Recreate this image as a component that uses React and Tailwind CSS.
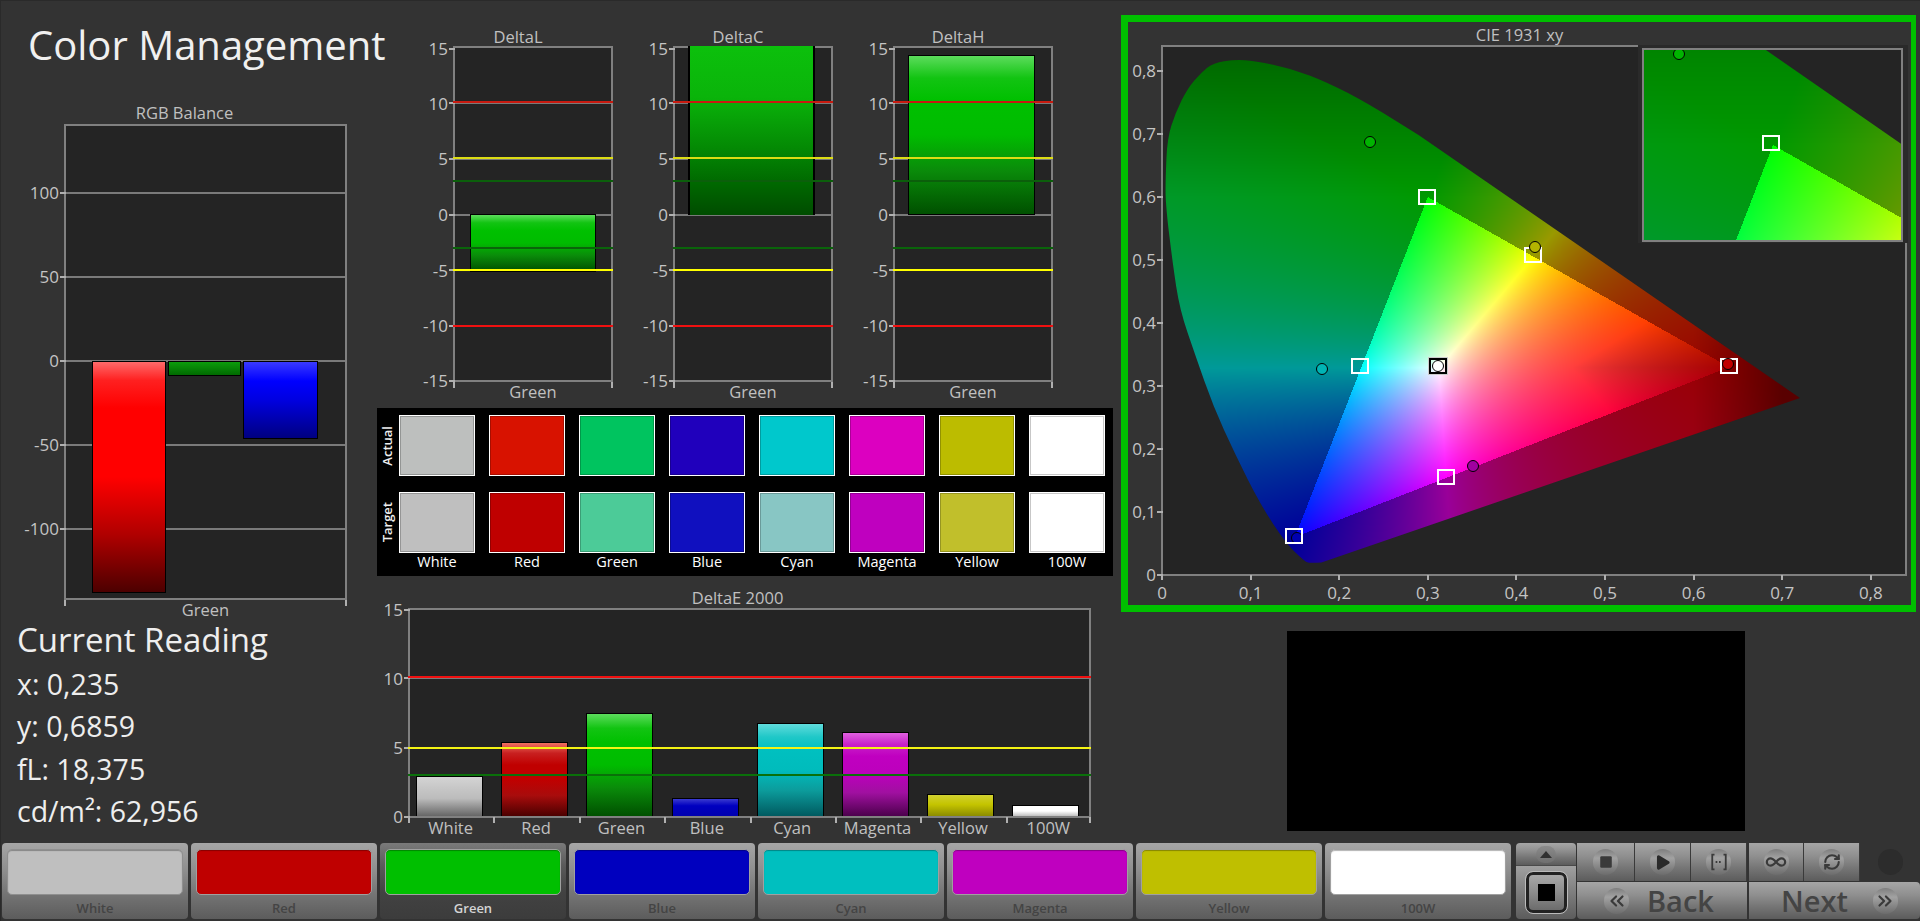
import React, { useEffect, useRef } from 'react';
import { Square, Play, Infinity as InfinityIcon, RefreshCw, ChevronsLeft, ChevronsRight } from 'lucide-react';

// outline of the horseshoe, read off the picture, curved part first
const LOCUS = [
  [0.18, 0.02], [0.166, 0.0185], [0.16, 0.023], [0.14, 0.05], [0.111, 0.112], [0.082, 0.193], [0.058, 0.267],
  [0.038, 0.347], [0.02, 0.421], [0.012, 0.495], [0.004, 0.588], [0.004, 0.631], [0.006, 0.693], [0.015, 0.733],
  [0.029, 0.773], [0.044, 0.797], [0.058, 0.813], [0.082, 0.818], [0.105, 0.816], [0.146, 0.804], [0.187, 0.782],
  [0.233, 0.748], [0.29, 0.698],
];

const gam = (c) => Math.pow(Math.max(c, 0), 1 / 1.15);

function chromaColor(x, y) {
  const Z = 1 - x - y;
  let r = 3.2406 * x - 1.5372 * y - 0.4986 * Z;
  let g = -0.9689 * x + 1.8758 * y + 0.0415 * Z;
  let b = 0.0557 * x - 0.204 * y + 1.057 * Z;
  const inside = Math.min(r, g, b) >= 0;
  r = Math.max(r, 0);
  g = Math.max(g, 0);
  b = Math.max(b, 0);
  const m = Math.max(r, g, b, 1e-6);
  r /= m;
  g /= m;
  b /= m;
  if (inside) {
    // the red corner of the triangle goes darker in the picture
    const t = Math.min(Math.max((0.2 - Math.max(g, b)) / 0.2, 0), 1);
    const f = r >= 1 ? 1 - 0.35 * t : 1;
    return [gam(r) * 255 * f, gam(g) * 255, gam(b) * 255];
  }
  let f = 0.6;
  if (r >= 1) f = 0.6 - 0.25 * (1 - Math.max(g, b)) * (x > 0.6 ? Math.min((x - 0.6) / 0.1, 1) : 0);
  if (g >= 1) f = 0.6 - 0.85 * Math.max(y - 0.6, 0);
  return [r * 255 * f, g * 255 * f, b * 255 * f];
}

function Chromaticity({ w, h, sx, sy, ox, oy }) {
  const ref = useRef(null);
  useEffect(() => {
    const ctx = ref.current.getContext('2d');
    const off = document.createElement('canvas');
    off.width = w;
    off.height = h;
    const octx = off.getContext('2d');
    const img = octx.createImageData(w, h);
    for (let py = 0; py < h; py++) {
      for (let px = 0; px < w; px++) {
        const c = chromaColor((px + 0.5 - ox) / sx, (oy - py - 0.5) / sy);
        const i = (py * w + px) * 4;
        img.data[i] = c[0];
        img.data[i + 1] = c[1];
        img.data[i + 2] = c[2];
        img.data[i + 3] = 255;
      }
    }
    octx.putImageData(img, 0, 0);
    const pts = LOCUS.map(([x, y]) => [x * sx + ox, oy - y * sy]);
    ctx.clearRect(0, 0, w, h);
    ctx.save();
    ctx.beginPath();
    ctx.moveTo(pts[0][0], pts[0][1]);
    for (let i = 1; i < pts.length - 1; i++) {
      ctx.quadraticCurveTo(pts[i][0], pts[i][1], (pts[i][0] + pts[i + 1][0]) / 2, (pts[i][1] + pts[i + 1][1]) / 2);
    }
    ctx.lineTo(pts[pts.length - 1][0], pts[pts.length - 1][1]);
    ctx.lineTo(0.72 * sx + ox, oy - 0.281 * sy);
    ctx.closePath();
    ctx.clip();
    ctx.drawImage(off, 0, 0);
    ctx.restore();
  }, [w, h, sx, sy, ox, oy]);
  return <canvas ref={ref} width={w} height={h} className="absolute left-0 top-0" />;
}

const Marker = ({ x, y, className }) => (
  <span className={`absolute rounded-full border-[1.5px] border-black w-[12px] h-[12px] -translate-x-1/2 -translate-y-1/2 ${className}`} style={{ left: x, top: y }} />
);

const Target = ({ x, y, dark }) => (
  <span className={`absolute w-[18px] h-[16px] border-2 -translate-x-1/2 -translate-y-1/2 ${dark ? 'border-black outline outline-[#cccccc]' : 'border-white'}`} style={{ left: x, top: y }} />
);

// ticks to the left of a plot, y comes from the chart scale
const YTicks = ({ ticks }) =>
  ticks.map(([label, y]) => (
    <div key={label} className="absolute right-full flex items-center h-0 text-[17px] text-[#c4c4c4]" style={{ top: y }}>
      <span className="mr-px">{label}</span>
      <span className="w-[6px] h-[2px] bg-[#b0b0b0]" />
    </div>
  ));

const Grid = ({ ys }) =>
  ys.map((y) => <div key={y} className="absolute left-0 right-0 h-[2px] bg-[#7a7a7a]" style={{ top: y - 1 }} />);

const Limit = ({ y, className }) => <div className={`absolute -left-[2px] -right-[2px] z-10 ${className}`} style={{ top: y }} />;

const BAR_GREEN = 'bg-[linear-gradient(#5cdc5c_0%,#12c412_14%,#00c000_28%,#00bc00_50%,#0a8c0a_72%,#005000_100%)]';

const DELTA_TICKS = [15, 10, 5, 0, -5, -10, -15];

function DeltaChart({ title, bar, barClass, left, width, top, height }) {
  const yOf = (v) => 166.7 - v * 11.13;
  return (
    <div className="w-[160px] shrink-0">
      <div className="h-[20px] pr-[30px] text-center text-[16.5px] leading-[22px] text-[#c0c0c0] whitespace-nowrap">{title}</div>
      <div className="relative h-[336px] border-2 border-[#808080] bg-[#242424]">
        <YTicks ticks={DELTA_TICKS.map((v) => [String(v), v === 15 ? yOf(v) + 1 : v === -15 ? yOf(v) - 1 : yOf(v)])} />
        <Grid ys={[10, 5, 0, -5, -10].map(yOf)} />
        <div className={`absolute border border-black box-border ${bar} ${barClass}`} style={{ left, width, top, height }} />
        <Limit y={yOf(10) - 2} className="h-[2px] bg-[#c81a10]" />
        <Limit y={yOf(5) - 2} className="h-[2px] bg-[#dcdc14]" />
        <Limit y={yOf(3) - 1} className="h-[2px] bg-[#0b5f0b]" />
        <Limit y={yOf(-3) - 1} className="h-[2px] bg-[#0a640a]" />
        <Limit y={yOf(-5) - 1} className="h-[2px] bg-[#ffff00]" />
        <Limit y={yOf(-10) - 1} className="h-[2px] bg-[#f01010]" />
        <span className="absolute -left-[2px] -bottom-[8px] w-[2px] h-[6px] bg-[#b0b0b0]" />
        <span className="absolute -right-[2px] -bottom-[8px] w-[2px] h-[6px] bg-[#b0b0b0]" />
      </div>
      <div className="h-[21px] text-center text-[16.5px] leading-[19px] text-[#c0c0c0]">Green</div>
    </div>
  );
}

function RgbChart() {
  const yOf = (v) => 235 - v * 1.68;
  return (
    <div className="ml-[63px] w-[283px]">
      <div className="relative h-[476px] border-2 border-[#808080] bg-[#242424]">
        <YTicks ticks={[100, 50, 0, -50, -100].map((v) => [String(v), yOf(v)])} />
        <Grid ys={[100, 50, 0, -50, -100].map(yOf)} />
        <div className="absolute left-[26px] flex items-start gap-[2px]" style={{ top: yOf(0) }}>
          <div className="w-[74px] h-[232px] border border-black bg-[linear-gradient(#ff6a6a_0%,#ff2020_8%,#ff0000_20%,#ff0000_50%,#b00000_75%,#4c0000_100%)]" />
          <div className="w-[73px] h-[15px] border border-black bg-[linear-gradient(#0c9c0c,#006a00)]" />
          <div className="w-[75px] h-[78px] border border-black bg-[linear-gradient(#3a3aff_0%,#0000ff_25%,#0000e0_50%,#000080_100%)]" />
        </div>
        <span className="absolute -left-[2px] -bottom-[8px] w-[2px] h-[6px] bg-[#b0b0b0]" />
        <span className="absolute -right-[2px] -bottom-[8px] w-[2px] h-[6px] bg-[#b0b0b0]" />
      </div>
      <div className="h-[22px] text-center text-[16.5px] leading-[20px] text-[#c0c0c0]">Green</div>
    </div>
  );
}

const SWATCHES = [
  ['White', '#bdbfbe', '#bfbfbf'],
  ['Red', '#d81200', '#bf0000'],
  ['Green', '#00c45f', '#4ccb98'],
  ['Blue', '#2000bc', '#1010bf'],
  ['Cyan', '#00c8cc', '#88c6c4'],
  ['Magenta', '#dc00c0', '#bf00bf'],
  ['Yellow', '#bcbc00', '#c1bf2b'],
  ['100W', '#ffffff', '#ffffff'],
];

const Swatch = ({ color }) => (
  <div className="h-[61px] border border-white shadow-[inset_0_0_0_1px_rgba(0,0,0,0.22)]" style={{ backgroundColor: color }} />
);

function SwatchPanel() {
  return (
    <div className="w-[736px] h-[168px] bg-black flex">
      <div className="w-[20px] shrink-0 flex flex-col pt-[7px] gap-[16px] text-[13px] font-semibold text-[#eeeeee]">
        <div className="h-[61px] flex items-center justify-center"><span className="[writing-mode:vertical-rl] rotate-180 leading-none">Actual</span></div>
        <div className="h-[61px] flex items-center justify-center"><span className="[writing-mode:vertical-rl] rotate-180 leading-none">Target</span></div>
      </div>
      <div className="grid grid-cols-8 gap-x-[14px] w-[706px] ml-[2px] pt-[7px] content-start">
        {SWATCHES.map((s) => <Swatch key={s[0] + 'a'} color={s[1]} />)}
        <div className="col-span-8 h-[16px]" />
        {SWATCHES.map((s) => <Swatch key={s[0] + 't'} color={s[2]} />)}
        {SWATCHES.map((s) => (
          <div key={s[0] + 'l'} className="mt-[1px] text-center text-[14.5px] leading-[15px] text-white">{s[0]}</div>
        ))}
      </div>
    </div>
  );
}

const DE_BARS = [
  ['White', 40, 'bg-[linear-gradient(#d4d4d4_0%,#c6c6c6_30%,#bcbcbc_55%,#666666_100%)]'],
  ['Red', 74, 'bg-[linear-gradient(#f07060_0%,#c82020_14%,#c00000_30%,#c00000_50%,#a80c0c_72%,#4c0000_100%)]'],
  ['Green', 103, BAR_GREEN],
  ['Blue', 18, 'bg-[linear-gradient(#3a3ad0_0%,#0000c0_40%,#0000b0_100%)]'],
  ['Cyan', 93, 'bg-[linear-gradient(#60dcdc_0%,#20c8c8_14%,#00c0c0_28%,#00bcbc_50%,#0c9c9c_72%,#005a60_100%)]'],
  ['Magenta', 84, 'bg-[linear-gradient(#e060e0_0%,#c820c8_14%,#c000c0_28%,#bc00bc_50%,#a010a0_72%,#4c004c_100%)]'],
  ['Yellow', 22, 'bg-[linear-gradient(#d0d030_0%,#c4c400_45%,#8c8c00_100%)]'],
  ['100W', 11, 'bg-[linear-gradient(#ffffff_0%,#ffffff_50%,#c0c0c0_100%)]'],
];

function DeltaEChart() {
  const yOf = (v) => 207 - v * 13.87;
  return (
    <div className="ml-[31px] w-[683px]">
      <div className="h-[20px] pr-[24px] text-center text-[16.5px] leading-[20px] text-[#c0c0c0]">DeltaE 2000</div>
      <div className="relative h-[210px] border-2 border-[#808080] bg-[#242424]">
        <YTicks ticks={[[ '15', yOf(15) + 1 ], [ '10', yOf(10) ], [ '5', yOf(5) ], [ '0', yOf(0) ]]} />
        <Grid ys={[yOf(10), yOf(5)]} />
        <div className="absolute inset-0 flex items-end gap-[18.2px] pl-[6px]">
          {DE_BARS.map(([name, h, cls]) => (
            <div key={name} className={`w-[67px] border border-black border-b-0 ${cls}`} style={{ height: h }} />
          ))}
        </div>
        <Limit y={yOf(10) - 2} className="h-[2px] bg-[#f01010]" />
        <Limit y={yOf(5) - 1} className="h-[2px] bg-[#f4f414]" />
        <Limit y={yOf(3) - 1} className="h-[2px] bg-[#0a700a]" />
      </div>
      <div className="grid grid-cols-8 h-[20px] -mt-px">
        {SWATCHES.map((s, i) => (
          <div key={s[0]} className={`relative text-center text-[16.5px] leading-[21px] text-[#c0c0c0] ${i === 7 ? 'after:absolute after:right-0 after:top-0 after:w-[2px] after:h-[6px] after:bg-[#b0b0b0]' : ''}`}>
            <span className="absolute left-0 top-0 w-[2px] h-[6px] bg-[#b0b0b0]" />
            {s[0]}
          </div>
        ))}
      </div>
    </div>
  );
}

const CIE_X = [0, 0.1, 0.2, 0.3, 0.4, 0.5, 0.6, 0.7, 0.8];
const CIE_Y = [0.8, 0.7, 0.6, 0.5, 0.4, 0.3, 0.2, 0.1, 0];
const fmt = (v) => (v === 0 ? '0' : v.toFixed(1).replace('.', ','));

function CieChart() {
  return (
    <div className="w-[795px] h-[597px] mt-[14px] border-t-[7px] border-b-[7px] border-l-[7px] border-r-[5px] border-[#00bf00]">
      <div className="h-[23px] pt-[3px] text-center text-[16.5px] leading-[20px] text-[#c0c0c0]">CIE 1931 xy</div>
      <div className="relative ml-[33px] w-[746px] h-[531px] border-2 border-[#808080] bg-[#242424]">
        <Chromaticity w={742} h={527} sx={886} sy={630} ox={-1} oy={528} />
        <YTicks ticks={CIE_Y.map((v) => [fmt(v), 528 - 630 * v])} />
        {CIE_X.map((v) => (
          <div key={v} className="absolute top-full flex flex-col items-center w-[30px] -translate-x-1/2 text-[17px] text-[#c4c4c4]" style={{ left: -1 + 886 * v, marginTop: 1 }}>
            <span className="w-[2px] h-[5px] bg-[#b0b0b0]" />
            <span className="leading-[26px]">{fmt(v)}</span>
          </div>
        ))}
        <Marker x={134} y={491} className="bg-[#0000b0]" />
        <Target x={264} y={150} />
        <Target x={370} y={208} />
        <Target x={197} y={319} />
        <Target x={275} y={319} dark />
        <Target x={566} y={319} />
        <Target x={283} y={430} />
        <Target x={131} y={489} />
        <Marker x={207} y={95} className="bg-[#00b400]" />
        <Marker x={372} y={200} className="bg-[#b4b400]" />
        <Marker x={159} y={322} className="bg-[#00b4b4]" />
        <Marker x={565} y={317} className="bg-[#c00000]" />
        <Marker x={310} y={419} className="bg-[#a000a0]" />
        <Marker x={275} y={319} className="bg-white" />
        <div className="absolute -right-[3px] -top-[2px] w-[270px] h-[198px] bg-[#2a2a2a] pl-[4px] pt-[3px] z-10">
          <div className="relative w-[261px] h-[194px] border-2 border-[#808080] bg-[#242424] overflow-hidden">
            <Chromaticity w={257} h={190} sx={1426} sy={1020} ox={-298.8} oy={707} />
            <Marker x={35} y={4} className="bg-[#00b400]" />
            <Target x={127} y={93} />
          </div>
        </div>
      </div>
    </div>
  );
}

const BTN = 'bg-[linear-gradient(#a6a6a6_0%,#8f8f8f_35%,#767676_65%,#5c5c5c_100%)]';

const COLOR_BUTTONS = [
  ['White', 'bg-[#bfbfbf] border-[#8f8f8f]'],
  ['Red', 'bg-[#bf0000] border-[#a0a0a0]'],
  ['Green', 'bg-[#00bf00] border-[#a0a0a0]', true],
  ['Blue', 'bg-[#0000bf] border-[#a0a0a0]'],
  ['Cyan', 'bg-[#00bfbf] border-[#a0a0a0]'],
  ['Magenta', 'bg-[#bf00bf] border-[#a0a0a0]'],
  ['Yellow', 'bg-[#bfbf00] border-[#a0a0a0]'],
  ['100W', 'bg-white border-[#a0a0a0]'],
];

const ColorButton = ({ name, fill, active }) => (
  <button className={`w-[186px] h-[76px] shrink-0 rounded-[4px] px-[5px] pt-[6px] flex flex-col ${active ? 'bg-[linear-gradient(#7a7a7a_0%,#5a5a5a_30%,#424242_65%,#3c3c3c_100%)]' : BTN}`}>
    <span className={`block w-full h-[46px] rounded-[5px] border shadow-[inset_0_1px_1px_rgba(0,0,0,0.3)] ${fill}`} />
    <span className={`mt-[3px] text-[13px] font-semibold leading-[20px] ${active ? 'text-[#d4d4d4]' : 'text-[#444444]'}`}>{name}</span>
  </button>
);

const Bump = ({ children, className = '' }) => (
  <span className={`w-[25px] h-[26px] rounded-full flex items-center justify-center text-[#3a3a3a] bg-[linear-gradient(#7e7e7e,#a2a2a2_35%,#6c6c6c)] ${className}`}>{children}</span>
);

const TransportButton = ({ width, children }) => (
  <button className={`${width} h-[38px] flex items-center justify-center border-r border-[#3a3a3a] ${BTN}`}>
    <Bump>{children}</Bump>
  </button>
);

function BottomBar() {
  return (
    <div className="h-[78px] flex pl-[1px]">
      <div className="flex gap-[3px]">
        {COLOR_BUTTONS.map(([name, fill, active]) => <ColorButton key={name} name={name} fill={fill} active={active} />)}
      </div>
      <div className="ml-[5px] w-[60px] h-[76px] flex flex-col">
        <button className={`h-[23px] rounded-t-[4px] border-b border-[#4a4a4a] flex items-center justify-center ${BTN}`}>
          <span className="w-[20px] h-[17px] rounded-full flex items-center justify-center bg-[linear-gradient(#8a8a8a,#707070)]">
            <svg width="12" height="7" viewBox="0 0 12 7"><path d="M6 0 L12 7 L0 7 Z" fill="#303030" /></svg>
          </span>
        </button>
        <button className="flex-1 rounded-b-[4px] flex items-center justify-center bg-[linear-gradient(#a0a0a0,#5c5c5c)]">
          <span className="w-[41px] h-[41px] rounded-[7px] border-[3px] border-[#222222] outline outline-[#bbbbbb] flex items-center justify-center bg-[linear-gradient(#a8a8a8_0%,#8c8c8c_50%,#6c6c6c_100%)]">
            <span className="w-[17px] h-[17px] bg-black" />
          </span>
        </button>
      </div>
      <div className="ml-px flex-1 flex flex-col gap-px">
        <div className="flex">
          <TransportButton width="w-[58px]"><Square size={14} fill="#3a3a3a" strokeWidth={0} className="scale-110" /></TransportButton>
          <TransportButton width="w-[56px]"><Play size={19} fill="#2a2a2a" strokeWidth={0} /></TransportButton>
          <TransportButton width="w-[56px]">
            <svg width="18" height="18" viewBox="0 0 16 16" fill="none" stroke="#3a3a3a" strokeWidth="1.6">
              <path d="M4 1.5 H2 V14.5 H4 M12 1.5 H14 V14.5 H12" />
              <path d="M5 8 H11" strokeDasharray="1.5 1.5" />
            </svg>
          </TransportButton>
          <span className="w-[2px]" />
          <TransportButton width="w-[55px]"><InfinityIcon size={22} strokeWidth={2.4} /></TransportButton>
          <TransportButton width="w-[56px]"><RefreshCw size={18} strokeWidth={2.8} /></TransportButton>
          <div className="flex-1 h-[38px] flex items-center justify-center bg-[#333333]">
            <span className="w-[25px] h-[26px] rounded-full bg-[#2c2c2c]" />
          </div>
        </div>
        <div className="flex gap-[2px]">
          <button className={`w-[170px] h-[37px] rounded-bl-[4px] flex items-center pl-[27px] text-[#444444] ${BTN}`}>
            <Bump><ChevronsLeft size={22} strokeWidth={2.4} /></Bump>
            <span className="ml-[18px] text-[29px] font-semibold leading-none">Back</span>
          </button>
          <button className={`flex-1 h-[37px] rounded-r-[4px] flex items-center pl-[32px] text-[#444444] ${BTN}`}>
            <span className="text-[29px] font-semibold leading-none">Next</span>
            <Bump className="ml-[25px]"><ChevronsRight size={22} strokeWidth={2.4} /></Bump>
          </button>
        </div>
      </div>
    </div>
  );
}

export default function App() {
  return (
    <div className="w-[1920px] h-[921px] overflow-hidden bg-[#333333] border-t border-l border-[#2a2a2a] box-border font-['Open_Sans','Noto_Sans',sans-serif]">
      <div className="flex h-[842px]">
        <div className="w-[376px] shrink-0 flex flex-col">
          <div className="h-[102px] pl-[27px] pt-[16px]">
            <h1 className="text-[40px] leading-[56px] text-[#f0f0f0] whitespace-nowrap">Color Management</h1>
          </div>
          <div className="h-[21px] ml-[63px] w-[283px] pr-[42px] text-center text-[16.5px] leading-[19px] text-[#c0c0c0]">RGB Balance</div>
          <RgbChart />
          <div className="pl-[16px] text-[#eeeeee]">
            <div className="h-[41px] text-[33px] leading-[36px]">Current Reading</div>
            <div className="text-[28.5px] leading-[42.4px]">x: 0,235</div>
            <div className="text-[28.5px] leading-[42.4px]">y: 0,6859</div>
            <div className="text-[28.5px] leading-[42.4px]">fL: 18,375</div>
            <div className="text-[28.5px] leading-[42.4px]">cd/m²: 62,956</div>
          </div>
        </div>
        <div className="w-[744px] shrink-0 flex flex-col pt-[25px]">
          <div className="flex gap-[60px] pl-[76px]">
            <DeltaChart title="DeltaL" bar={BAR_GREEN} barClass="" left={15} width={126} top={166} height={58} />
            <DeltaChart title="DeltaC" bar="bg-[linear-gradient(#0cc00c_0%,#0ab40a_30%,#048a04_60%,#006a00_80%,#004c00_100%)]" barClass="border-y-0 border-x-2 border-b-black" left={13} width={127} top={-2} height={169} />
            <DeltaChart title="DeltaH" bar={BAR_GREEN} barClass="" left={13} width={127} top={7} height={160} />
          </div>
          <div className="mt-[5px]"><SwatchPanel /></div>
          <div className="mt-[12px]"><DeltaEChart /></div>
        </div>
        <div className="flex-1 flex flex-col">
          <CieChart />
          <div className="ml-[166px] mt-[19px] w-[458px] h-[200px] bg-black" />
        </div>
      </div>
      <BottomBar />
    </div>
  );
}
